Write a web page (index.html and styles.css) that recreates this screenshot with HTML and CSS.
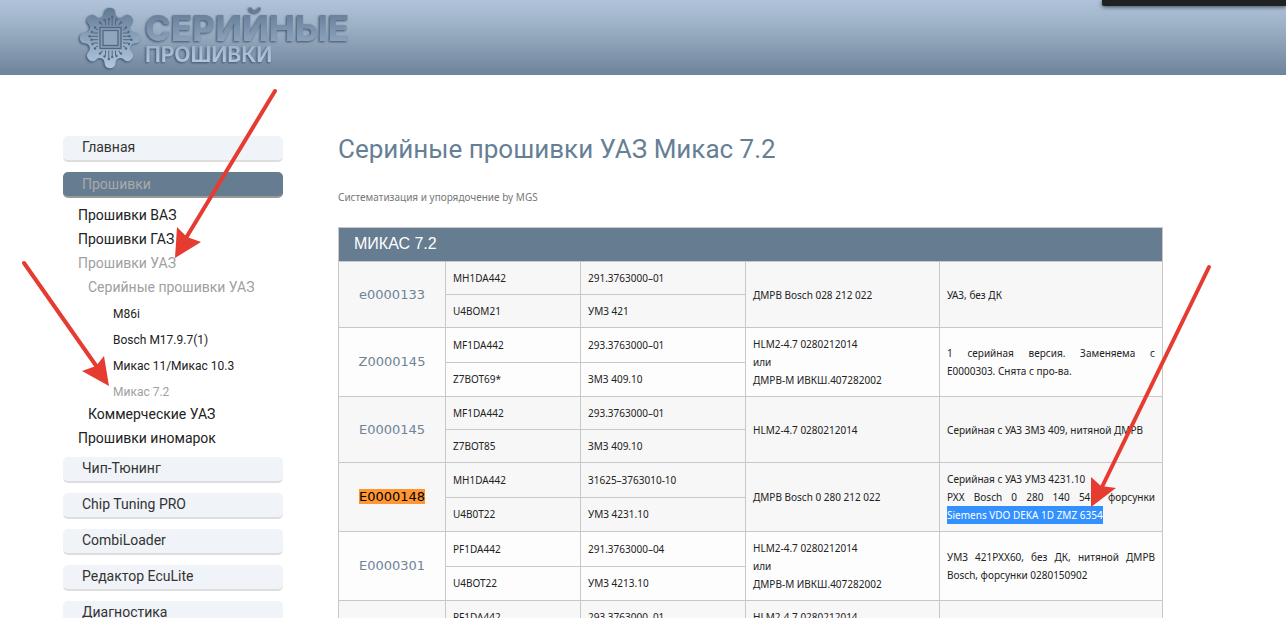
FILE: index.html
```html
<!DOCTYPE html>
<html lang="ru">
<head>
<meta charset="utf-8">
<title>Серийные прошивки УАЗ Микас 7.2</title>
<link rel="stylesheet" href="styles.css">
</head>
<body>
<header class="header">
  <a class="logo" href="#" aria-label="Серийные прошивки">
    <svg class="logo-mark" viewBox="-32 -32 64 64" aria-hidden="true">
      <defs>
        <linearGradient id="gearFill" x1="0" y1="0" x2="0" y2="1">
          <stop offset="0" stop-color="#5f7690"/>
          <stop offset="0.5" stop-color="#8ba3bd"/>
          <stop offset="1" stop-color="#b2c9e2"/>
        </linearGradient>
        <path id="tooth" d="M0 2L-8.600 -20.500C-6 -21.500 -5.600 -23 -5.300 -26C-4.800 -31.600 4.800 -31.600 5.300 -26C5.600 -23 6 -21.500 8.600 -20.500Z"/>
        <clipPath id="gear">
          <circle r="20"/>
          <use href="#tooth"/>
          <use href="#tooth" transform="rotate(45)"/>
          <use href="#tooth" transform="rotate(90)"/>
          <use href="#tooth" transform="rotate(135)"/>
          <use href="#tooth" transform="rotate(180)"/>
          <use href="#tooth" transform="rotate(225)"/>
          <use href="#tooth" transform="rotate(270)"/>
          <use href="#tooth" transform="rotate(315)"/>
        </clipPath>
        <g id="traces">
          <path d="M-1.700 -12.500V-19M1.700 -12.500V-21M-5 -12.500V-17L-6 -18M5 -12.500V-17L6 -18.500M-8.500 -12.500V-14L-10.500 -15.500M8.500 -12.500V-14L10.500 -15.500" fill="none" stroke="#53687e" stroke-width="1"/>
          <g fill="#53687e"><circle cx="-1.700" cy="-19" r="1.200"/><circle cx="1.700" cy="-21" r="1.200"/><circle cx="-6" cy="-18" r="1.200"/><circle cx="6" cy="-18.500" r="1.200"/><circle cx="-10.500" cy="-15.500" r="1.200"/><circle cx="10.500" cy="-15.500" r="1.200"/></g>
        </g>
      </defs>
      <g clip-path="url(#gear)"><rect x="-32" y="-32" width="64" height="64" fill="url(#gearFill)"/></g>
      <g transform="translate(0.500 0)">
        <use href="#traces"/>
        <use href="#traces" transform="rotate(90)"/>
        <use href="#traces" transform="rotate(180)"/>
        <use href="#traces" transform="rotate(270)"/>
        <rect x="-10.500" y="-10.500" width="21" height="21" fill="#869eb8" stroke="#53687e" stroke-width="1.300"/>
        <rect x="-7.500" y="-7.500" width="15" height="15" fill="#8fa6be" stroke="#53687e" stroke-width="1.300"/>
      </g>
    </svg>
    <span class="logo-text">
      <span class="logo-top">СЕРИЙНЫЕ</span>
      <span class="logo-bottom">ПРОШИВКИ</span>
    </span>
  </a>
  <div class="dock"></div>
</header>

<div class="page">
  <nav class="menu" aria-label="Меню">
    <a class="tab" href="#">Главная</a>
    <a class="tab tab-active" href="#">Прошивки</a>
    <div class="tree">
      <a class="branch" href="#">Прошивки ВАЗ</a>
      <a class="branch" href="#">Прошивки ГАЗ</a>
      <a class="branch current" href="#">Прошивки УАЗ</a>
      <a class="branch level-2 current" href="#">Серийные прошивки УАЗ</a>
      <div class="subtree">
        <a class="leaf" href="#">M86i</a>
        <a class="leaf" href="#">Bosch M17.9.7(1)</a>
        <a class="leaf" href="#">Микас 11/Микас 10.3</a>
        <a class="leaf current" href="#">Микас 7.2</a>
      </div>
      <a class="branch level-2" href="#">Коммерческие УАЗ</a>
      <a class="branch" href="#">Прошивки иномарок</a>
    </div>
    <a class="tab" href="#">Чип-Тюнинг</a>
    <a class="tab" href="#">Chip Tuning PRO</a>
    <a class="tab" href="#">CombiLoader</a>
    <a class="tab" href="#">Редактор EcuLite</a>
    <a class="tab" href="#">Диагностика</a>
  </nav>

  <main class="content">
    <h1 class="title">Серийные прошивки УАЗ Микас 7.2</h1>
    <p class="note">Систематизация и упорядочение by MGS</p>
    <table class="firmware">
      <colgroup><col class="col-code"><col class="col-id"><col class="col-part"><col class="col-sensor"><col></colgroup>
      <thead><tr><th colspan="5">МИКАС 7.2</th></tr></thead>
      <tbody class="group">
        <tr><td class="code" rowspan="2"><a href="#">e0000133</a></td><td>MH1DA442</td><td>291.3763000–01</td><td rowspan="2">ДМРВ Bosch 028 212 022</td><td class="about" rowspan="2">УАЗ, без ДК</td></tr>
        <tr><td>U4BOM21</td><td>УМЗ 421</td></tr>
      </tbody>
      <tbody class="group light">
        <tr><td class="code" rowspan="2"><a href="#">Z0000145</a></td><td>MF1DA442</td><td>293.3763000–01</td><td rowspan="2">HLM2-4.7 0280212014<br>или<br>ДМРВ-М ИВКШ.407282002</td><td class="about" rowspan="2">1 серийная версия. Заменяема с E0000303.&nbsp;Снята с про-ва.</td></tr>
        <tr><td>Z7BOT69*</td><td>ЗМЗ 409.10</td></tr>
      </tbody>
      <tbody class="group">
        <tr><td class="code" rowspan="2"><a href="#">E0000145</a></td><td>MF1DA442</td><td>293.3763000–01</td><td rowspan="2">HLM2-4.7 0280212014</td><td class="about" rowspan="2">Серийная с УАЗ ЗМЗ 409, нитяной ДМРВ</td></tr>
        <tr><td>Z7BOT85</td><td>ЗМЗ 409.10</td></tr>
      </tbody>
      <tbody class="group">
        <tr><td class="code" rowspan="2"><a class="found" href="#">E0000148</a></td><td>MH1DA442</td><td>31625–3763010-10</td><td rowspan="2">ДМРВ Bosch 0 280 212 022</td><td class="about" rowspan="2">Серийная с УАЗ УМЗ 4231.10<br>РХХ Bosch 0 280 140 545, форсунки <span class="selected">Siemens VDO DEKA 1D ZMZ 6354</span></td></tr>
        <tr><td>U4B0T22</td><td>УМЗ 4231.10</td></tr>
      </tbody>
      <tbody class="group light">
        <tr><td class="code" rowspan="2"><a href="#">E0000301</a></td><td>PF1DA442</td><td>291.3763000–04</td><td rowspan="2">HLM2-4.7 0280212014<br>или<br>ДМРВ-М ИВКШ.407282002</td><td class="about" rowspan="2">УМЗ 421РХХ60, без ДК, нитяной ДМРВ Bosch, форсунки 0280150902</td></tr>
        <tr><td>U4BOT22</td><td>УМЗ 4213.10</td></tr>
      </tbody>
      <tbody class="group">
        <tr><td class="code"></td><td>PF1DA442</td><td>293.3763000–01</td><td>HLM2-4.7 0280212014</td><td class="about"></td></tr>
      </tbody>
    </table>
  </main>
</div>

<svg class="arrows" width="1286" height="618" viewBox="0 0 1286 618" aria-hidden="true">
  <g stroke="#e63b30" stroke-width="4" stroke-linecap="round">
    <path d="M275 91L186 238"/>
    <path d="M24 263L97 367"/>
    <path d="M1209 267L1102 487"/>
  </g>
  <g fill="#e63b30">
    <path d="M175 258L177 227L187 237L201 242Z"/>
    <path d="M109 386L104 356L96 366L82 371Z"/>
    <path d="M1091 507L1091 477L1101 486L1116 488Z"/>
  </g>
</svg>
</body>
</html>
```
FILE: styles.css
```css
* { box-sizing: border-box; }

body {
  position: relative;
  height: 100vh;
  margin: 0;
  overflow: hidden;
  background: #fff;
  color: #222;
  font-family: Roboto, "Liberation Sans", sans-serif;
}

a { color: inherit; text-decoration: none; }

.header {
  position: relative;
  height: 75px;
  padding: 6px 78px;
  background: linear-gradient(#b0c3da, #9db1c6 35%, #6e849a);
}

.logo { display: flex; align-items: flex-start; gap: 3px; }

.logo-mark {
  width: 64px;
  height: 64px;
  filter: drop-shadow(-1px 1px 1px #3f5468);
}

.logo-text {
  display: flex;
  flex-direction: column;
  font-family: Inter, "Open Sans", sans-serif;
  filter: drop-shadow(-1px 1px 1px #3f5468);
}

.logo-top, .logo-bottom {
  background: linear-gradient(#5f7690, #90a8c2);
  background-clip: text;
  -webkit-background-clip: text;
  color: transparent;
}

.logo-top { padding-top: 4px; font-size: 35px; line-height: 36px; font-weight: 800; }

.logo-bottom {
  font-size: 21px;
  line-height: 18px;
  font-weight: 700;
  background-image: linear-gradient(#9db4cd, #b4cae2);
}

.dock {
  position: absolute;
  top: 0;
  right: 0;
  width: 184px;
  height: 6px;
  border-bottom-left-radius: 2px;
  background: #202124;
  box-shadow: 0 1px 4px #3c4a58;
}

.page {
  display: grid;
  grid-template-columns: 220px 1fr;
  gap: 55px;
  padding: 58px 123px 0 63px;
}

.menu {
  display: flex;
  flex-direction: column;
  gap: 10px;
  padding-top: 3px;
  font-size: 14px;
}

.tab {
  height: 26px;
  padding-left: 19px;
  border-bottom: 2px solid #ddd;
  border-radius: 5px;
  background: #f0f4f8;
  color: #333;
  line-height: 22px;
}

.tab-active {
  border-color: #999;
  background: #667c91;
  color: #aaa;
  line-height: 24px;
}

.tree {
  display: flex;
  flex-direction: column;
  margin: -5px 0 -3px;
  padding-left: 15px;
}

.branch { line-height: 24px; }
.level-2 { padding-left: 10px; }

.subtree {
  display: flex;
  flex-direction: column;
  margin: 2px 0 -3px;
  padding-left: 35px;
  font-size: 12px;
}

.leaf { line-height: 26px; }
.current { color: #a0a0a0; }

.title {
  margin: 0;
  color: #667f96;
  font-size: 26px;
  font-weight: 400;
  line-height: 32px;
}

.note {
  margin: 23px 0 21px;
  color: #777;
  font-family: "Noto Sans", sans-serif;
  font-size: 10px;
  line-height: 18px;
}

.firmware {
  width: 100%;
  table-layout: fixed;
  border-collapse: collapse;
  font-family: "Noto Sans", sans-serif;
  font-size: 10px;
  line-height: 18px;
}

.col-code { width: 107px; }
.col-id { width: 135px; }
.col-part { width: 165px; }
.col-sensor { width: 194px; }

.firmware th {
  padding: 6px 15px 7px;
  border: 1px solid #c8c8c8;
  background: #667c91;
  color: #fff;
  font-family: "Liberation Sans", sans-serif;
  font-size: 16px;
  font-weight: 400;
  line-height: 20px;
  text-align: left;
}

.firmware td {
  padding: 7px;
  border: 1px solid #c8c8c8;
}

.group { background: #f7f7f7; }
.light { background: #fdfdfd; }

.firmware .code {
  color: #6f8498;
  font-family: "DejaVu Sans", sans-serif;
  font-size: 13px;
  line-height: 16px;
  text-align: center;
}

.about { text-align: justify; }
.found { background: #ff9632; color: #000; }
.selected { padding: 2px 0; background: #3390ff; color: #fff; }

.arrows {
  position: absolute;
  top: 0;
  left: 0;
  pointer-events: none;
}
```
